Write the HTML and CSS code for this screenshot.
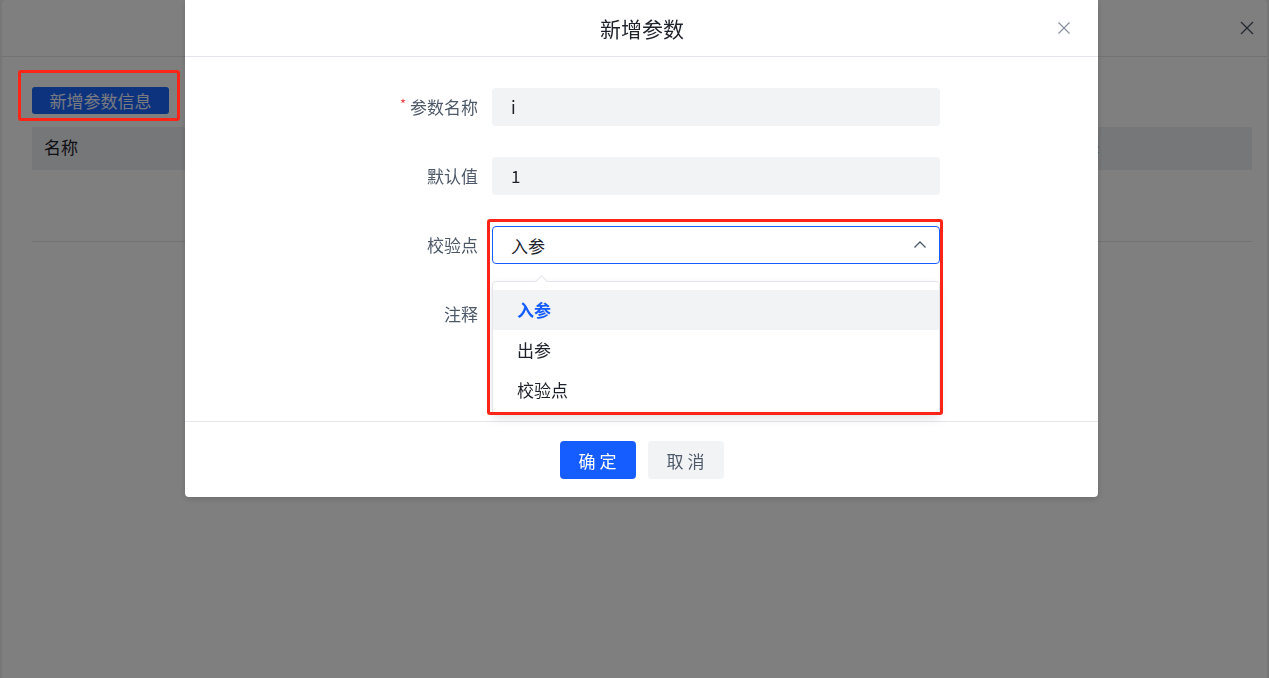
FILE: index.html
```html
<html>
	<head>
		<title>新增参数</title>
		<link rel="stylesheet" href="styles.css">
	</head>
	<body>

		<!-- page underneath: the parameter list dialog -->
		<div class="panel">
			<div class="panel-head">
				<span class="panel-close">
					<svg width="14" height="14" viewBox="0 0 14 14"><path d="M1 1L13 13M13 1L1 13" stroke="#4e5969" stroke-width="1.4" fill="none"/></svg>
				</span>
			</div>
			<div class="panel-body">
				<button class="btn-add">新增参数信息</button>
				<div class="table">
					<div class="table-head">
						<div class="cell">名称</div>
						<div class="cell">注释</div>
					</div>
					<div class="table-empty"></div>
				</div>
			</div>
		</div>

		<div class="mask"></div>

		<div class="modal-wrap">
			<div class="modal">
				<div class="modal-head">
					<span class="modal-title">新增参数</span>
					<span class="modal-close">
						<svg width="12" height="12" viewBox="0 0 12 12"><path d="M0.5 0.5L11.5 11.5M11.5 0.5L0.5 11.5" stroke="#86909c" stroke-width="1.2" fill="none"/></svg>
					</span>
				</div>

				<div class="modal-body">
					<div class="row">
						<label class="label"><span class="req">*</span>参数名称</label>
						<div class="input">i</div>
					</div>
					<div class="row">
						<label class="label">默认值</label>
						<div class="input">1</div>
					</div>
					<div class="row">
						<label class="label">校验点</label>
						<div class="select-wrap">
							<div class="select">
								<span>入参</span>
								<svg width="14" height="14" viewBox="0 0 14 14"><path d="M1.5 9.5L7 4L12.5 9.5" stroke="#4e5969" stroke-width="1.3" fill="none"/></svg>
							</div>
							<div class="popup">
								<div class="popup-arrow"></div>
								<div class="option active">入参</div>
								<div class="option">出参</div>
								<div class="option">校验点</div>
							</div>
						</div>
					</div>
					<div class="row">
						<label class="label">注释</label>
						<div class="textarea"></div>
					</div>
				</div>

				<div class="modal-foot">
					<button class="btn btn-primary">确定</button>
					<button class="btn btn-gray">取消</button>
				</div>
			</div>
		</div>

		<!-- red annotation frames -->
		<div class="mark mark-btn"></div>
		<div class="mark mark-select"></div>

	</body>
</html>
```

FILE: styles.css
```css
body { margin:0; background:#eeeeee; font-family:"Noto Sans CJK SC", "Noto Sans", sans-serif; overflow:hidden; }

.panel {
	margin-left:2px;
	width:1265px;
	height:678px;
	background:#fff;
	border-radius:4px 4px 0 0;
}
.panel-head {
	height:56px;
	border-bottom:1px solid #e5e6eb;
	display:flex;
	align-items:center;
	justify-content:flex-end;
	padding-right:13px;
}
.panel-close { display:flex; }
.panel-body { padding:30px 15px 0 30px; }

.btn-add {
	display:block;
	height:27px;
	width:137px;
	border:none;
	border-radius:3px;
	background:#1a66ff;
	color:#f0f4ff;
	font-family:inherit;
	font-size:17px;
	line-height:27px;
	padding:0;
}
.table { margin-top:13px; }
.table-head {
	display:grid;
	grid-template-columns:1021px 1fr;
	height:43px;
	background:#eceef1;
	align-items:center;
	font-size:17px;
	color:#1d2129;
}
.cell { padding-left:12px; margin-top:-4px; }
.table-empty { height:71px; border-bottom:1px solid #e5e6eb; }

.mask { position:fixed; inset:0; background:rgba(0,0,0,0.5); }

.modal-wrap {
	position:fixed;
	inset:0;
	display:flex;
	align-items:flex-start;
	padding-left:185px;
}
.modal {
	width:913px;
	background:#fff;
	border-radius:0 0 4px 4px;
	box-shadow:0 2px 6px rgba(0,0,0,0.15);
}
.modal-head {
	height:56px;
	border-bottom:1px solid #e5e6eb;
	display:flex;
	align-items:center;
	justify-content:center;
	position:relative;
}
.modal-title { font-size:21px; color:#1d2129; margin-left:1px; }
.modal-close { position:absolute; right:28px; top:22px; display:flex; }

.modal-body { padding:31px 0 0 0; height:333px; }
.row { display:flex; align-items:flex-start; margin-bottom:31px; }
.label {
	width:293px;
	flex:none;
	text-align:right;
	padding-right:14px;
	height:38px;
	line-height:38px;
	font-size:17px;
	color:#4e5969;
}
.req { color:#f53f3f; font-size:13px; margin-right:4px; vertical-align:top; position:relative; top:-3px; }

.input {
	width:448px;
	height:38px;
	box-sizing:border-box;
	background:#f2f3f5;
	border-radius:4px;
	padding-left:19px;
	line-height:38px;
	font-size:17px;
	color:#1d2129;
}
.select-wrap { position:relative; width:448px; }
.select {
	height:38px;
	box-sizing:border-box;
	border:1px solid #165dff;
	border-radius:4px;
	background:#fff;
	display:flex;
	align-items:center;
	justify-content:space-between;
	padding:0 12px 0 18px;
	font-size:17px;
	color:#1d2129;
}
.select svg { display:block; }
.textarea { width:448px; height:64px; background:#f2f3f5; border-radius:4px; }

.popup {
	position:absolute;
	left:0;
	right:0;
	top:55px;
	z-index:2;
	background:#fff;
	border:1px solid #e5e6eb;
	border-radius:4px;
	box-shadow:0 4px 10px rgba(0,0,0,0.1);
	padding:8px 0 4px;
}
.popup-arrow {
	position:absolute;
	left:44px;
	top:-5px;
	width:8px;
	height:8px;
	background:#fff;
	border-left:1px solid #e5e6eb;
	border-top:1px solid #e5e6eb;
	transform:rotate(45deg);
}
.option {
	height:40px;
	line-height:40px;
	padding-left:24px;
	font-size:17px;
	color:#1d2129;
}
.option.active { background:#f2f3f5; color:#165dff; font-weight:bold; }

.modal-foot {
	border-top:1px solid #e5e6eb;
	padding:19px 0 18px;
	display:flex;
	justify-content:center;
	gap:12px;
}
.btn {
	width:76px;
	height:38px;
	border:none;
	border-radius:4px;
	font-family:inherit;
	font-size:17px;
	letter-spacing:4px;
	text-indent:4px;
	padding:0;
}
.btn-primary { background:#165dff; color:#fff; }
.btn-gray { background:#f2f3f5; color:#4e5969; }

.mark {
	position:fixed;
	border:3px solid #fa2516;
	border-radius:3px;
}
.mark-btn { left:18px; top:70px; width:156px; height:45px; }
.mark-select { left:487px; top:219px; width:450px; height:190px; }
```
